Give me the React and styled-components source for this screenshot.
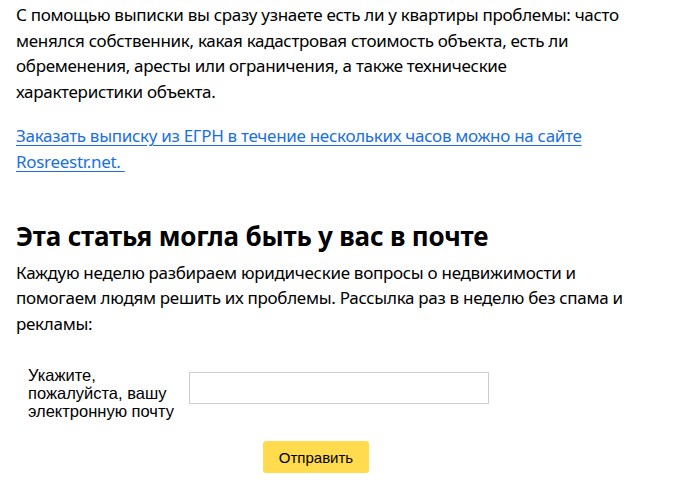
import React from "react";
import styled, { createGlobalStyle } from "styled-components";

const Global = createGlobalStyle`
  html, body { margin: 0; padding: 0; background: #fff; }
  body { font-family: "Noto Sans", "Open Sans", sans-serif; color: #000; }
`;

const Page = styled.main`
  padding: 2px 16px 0 16px;
  width: 620px;
`;

const Text = styled.p`
  margin: 0 0 ${(p) => p.$mb || 0}px;
  font-size: 17px;
  line-height: 25.6px;
  letter-spacing: -0.3px;
`;

const Link = styled.a`
  color: #1a70e0;
  text-decoration: underline;
  text-underline-offset: 3px;
`;

const Heading = styled.h2`
  margin: 0 0 8px;
  font-size: 26px;
  line-height: 32px;
  font-weight: 700;
  letter-spacing: -0.2px;
`;

const Form = styled.form`
  display: flex;
  flex-direction: column;
  padding-left: 12px;
  font-family: "Liberation Sans", Arial, sans-serif;
`;

const Row = styled.div`
  display: flex;
  align-items: flex-start;
  gap: 9px;
`;

const Label = styled.label`
  width: 152px;
  font-size: 16.5px;
  line-height: 17.6px;
`;

const Input = styled.input`
  box-sizing: border-box;
  width: 300px;
  height: 32px;
  margin-top: 5px;
  border: 1px solid #cccccc;
  outline: none;
`;

const Submit = styled.button`
  align-self: flex-start;
  margin: 21px 0 0 235px;
  width: 106px;
  height: 32px;
  border: none;
  border-radius: 3px;
  background: #ffdb4d;
  font-family: "Liberation Sans", Arial, sans-serif;
  font-size: 15px;
  color: #000;
`;

export default function App() {
  return (
    <>
      <Global />
      <Page>
        <Text $mb={19}>
          С помощью выписки вы сразу узнаете есть ли у квартиры проблемы: часто
          менялся собственник, какая кадастровая стоимость объекта, есть ли
          обременения, аресты или ограничения, а также технические
          характеристики объекта.
        </Text>
        <Text $mb={45}>
          <Link href="#">
            Заказать выписку из ЕГРН в течение нескольких часов можно на сайте
            Rosreestr.net.&nbsp;
          </Link>
        </Text>
        <Heading>Эта статья могла быть у вас в почте</Heading>
        <Text $mb={31}>
          Каждую неделю разбираем юридические вопросы о недвижимости и помогаем
          людям решить их проблемы. Рассылка раз в неделю без спама и рекламы:
        </Text>
        <Form onSubmit={(e) => e.preventDefault()}>
          <Row>
            <Label htmlFor="email">Укажите, пожалуйста, вашу электронную почту</Label>
            <Input id="email" type="email" />
          </Row>
          <Submit type="submit">Отправить</Submit>
        </Form>
      </Page>
    </>
  );
}
